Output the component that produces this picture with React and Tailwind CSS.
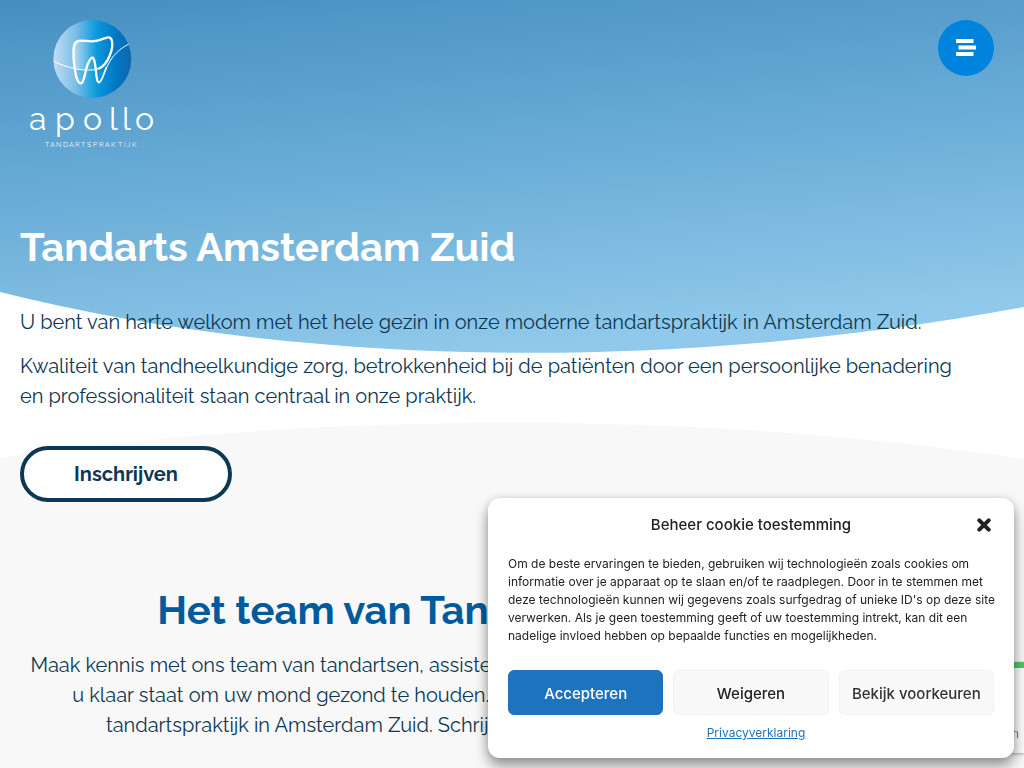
import React, { useState } from "react";

const Logo = () => (
  <svg viewBox="0 0 124 130" className="w-[124px] h-[130px]" role="img" aria-label="Apollo Tandartspraktijk">
    <defs>
      <linearGradient id="ball" x1="0" y1="0" x2="1" y2="0">
        <stop offset="0" stopColor="#c3dcf2" />
        <stop offset="0.28" stopColor="#7cbfe8" />
        <stop offset="0.55" stopColor="#0a9bdc" />
        <stop offset="0.8" stopColor="#0078c4" />
        <stop offset="1" stopColor="#1265ad" />
      </linearGradient>
      <linearGradient id="tooth" x1="0" y1="0" x2="1" y2="0">
        <stop offset="0" stopColor="#c3dcf2" />
        <stop offset="0.6" stopColor="#0a9bdc" />
        <stop offset="1" stopColor="#0078c4" />
      </linearGradient>
    </defs>
    {/* tooth mark */}
    <g transform="translate(-10 -10) scale(0.3333)" fill="none" stroke="#fff" strokeLinecap="round">
      <circle cx="217" cy="147" r="117" fill="url(#ball)" stroke="none" />
      <path
        d="M171 96C158 110 158 150 164 176C200 184 240 176 258 153C276 132 282 98 272 84C260 74 244 94 216 94C198 94 184 86 171 96Z"
        fill="url(#tooth)"
        stroke="none"
      />
      <path d="M103 155C140 173 200 189 236 176" strokeWidth="3" />
      <path
        d="M236 176C266 163 282 112 275 90C268 70 250 94 216 94C190 94 168 84 162 108C157 135 163 170 167 192C171 214 178 222 184 220C194 215 194 186 203 163C210 145 216 140 220 145C230 158 226 217 237 217"
        strokeWidth="7"
      />
      <path d="M237 217C250 214 252 178 276 144C292 124 308 111 325 103" strokeWidth="3" />
      <path d="M237 217C246 214 249 196 259 173" strokeWidth="5" />
    </g>
    <text
      x="-1 25 53 79 92 105"
      y="110"
      fill="#fff"
      fontSize="32"
      className="font-['Raleway','Lato',sans-serif] font-normal"
    >
      apollo
    </text>
    <text
      x="15 20 26 33 39 45 51 57 63 69 75 81 88 94 97 102"
      y="127"
      fill="#e3f1fa"
      fontSize="7"
      className="font-['Raleway','Lato',sans-serif] font-normal"
    >
      TANDARTSPRAKTIJK
    </text>
  </svg>
);

const HeroBackground = () => (
  <svg
    viewBox="0 0 1024 460"
    preserveAspectRatio="none"
    className="col-start-1 row-start-1 w-full h-[460px]"
    aria-hidden="true"
  >
    <defs>
      <linearGradient id="sky" gradientUnits="userSpaceOnUse" x1="493" y1="-50" x2="531" y2="350">
        <stop offset="0" stopColor="#458cc0" />
        <stop offset="0.13" stopColor="#4f97c6" />
        <stop offset="0.52" stopColor="#6aadd9" />
        <stop offset="0.62" stopColor="#73b3da" />
        <stop offset="1" stopColor="#90c9eb" />
      </linearGradient>
    </defs>
    <path d="M0 0H1024V459C700 411 324 411 0 458Z" fill="#fff" />
    <path d="M0 0H1024V307C710 366 330 375 0 292Z" fill="url(#sky)" />
  </svg>
);

const CookieDialog = ({ onClose }) => (
  <div
    role="dialog"
    aria-labelledby="cookie-title"
    className="fixed right-[10px] bottom-[10px] w-[526px] max-w-full rounded-xl bg-white px-5 pt-[17px] pb-4 text-[#222] font-['Inter',sans-serif] shadow-[0_8px_14px_rgba(0,0,0,0.4),0_0_8px_rgba(0,0,0,0.12)]"
  >
    <div className="grid grid-cols-[20px_1fr_20px] items-center mb-5">
      <h2 id="cookie-title" className="col-start-2 text-center text-[15px] leading-5 font-medium">
        Beheer cookie toestemming
      </h2>
      <button type="button" onClick={onClose} aria-label="Sluiten" className="flex h-5 items-center justify-center">
        <svg viewBox="0 0 14 14" className="w-[14px] h-[14px]" stroke="#222" strokeWidth="4" strokeLinecap="round">
          <path d="M2.3 2.3L11.7 11.7M11.7 2.3L2.3 11.7" />
        </svg>
      </button>
    </div>
    <p className="mb-[25px] text-xs leading-[18px]">
      Om de beste ervaringen te bieden, gebruiken wij technologieën zoals cookies om
      <br />
      informatie over je apparaat op te slaan en/of te raadplegen. Door in te stemmen met
      <br />
      <span className="whitespace-nowrap">
        deze technologieën kunnen wij gegevens zoals surfgedrag of unieke ID's op deze site
      </span>
      <br />
      verwerken. Als je geen toestemming geeft of uw toestemming intrekt, kan dit een
      <br />
      nadelige invloed hebben op bepaalde functies en mogelijkheden.
    </p>
    <div className="grid grid-cols-3 gap-[10px] text-[15px] font-medium">
      <button
        type="button"
        onClick={onClose}
        className="h-[45px] rounded-md border border-[#1e73be] bg-[#1e73be] pt-0.5 text-white"
      >
        Accepteren
      </button>
      <button
        type="button"
        onClick={onClose}
        className="h-[45px] rounded-md border border-[#f2f2f2] bg-[#f9f9f9] pt-0.5"
      >
        Weigeren
      </button>
      <button
        type="button"
        className="h-[45px] rounded-md border border-[#f2f2f2] bg-[#f9f9f9] pt-0.5 text-[#333] whitespace-nowrap"
      >
        Bekijk voorkeuren
      </button>
    </div>
    <div className="mt-[9px] pl-[10px] text-center text-xs leading-[18px]">
      <a href="#privacy" className="text-[#1e73be] underline">
        Privacyverklaring
      </a>
    </div>
  </div>
);

const ReviewCard = () => (
  <aside className="fixed right-0 bottom-[15px] w-48 h-[91px] border-t-[6px] border-[#4cc766] bg-[#fcfcfc] pt-[58px] pr-[5px] text-right text-xs leading-4 text-[#777] font-['Roboto',sans-serif] shadow-[0_1px_3px_rgba(0,0,0,0.35)]">
    beoordelingen
  </aside>
);

const App = () => {
  const [cookiesOpen, setCookiesOpen] = useState(true);

  return (
    <div className="h-screen overflow-hidden bg-[#f8f8f8] font-['Raleway','Lato',sans-serif] text-xl leading-[30px] text-[#0d3853]">
      <div className="grid">
        <HeroBackground />
        <div className="col-start-1 row-start-1">
          <header className="flex items-start justify-between pt-5 px-[30px]">
            <a href="#home">
              <Logo />
            </a>
            <button
              type="button"
              aria-label="Menu"
              className="flex w-14 h-14 items-center justify-center rounded-full bg-[#0083dc]"
            >
              <svg viewBox="0 0 20 18" className="w-5 h-[18px]" fill="#fff">
                <rect x="0" y="0" width="17.5" height="4" />
                <rect x="2.5" y="6.5" width="17.5" height="4" />
                <rect x="0" y="13" width="17.5" height="4" />
              </svg>
            </button>
          </header>
          <section className="px-5 pt-[69px]">
            <h1 className="text-[40px] leading-[56px] font-bold text-white">Tandarts Amsterdam Zuid</h1>
            <p className="mt-8">
              U bent van harte welkom met het hele gezin in onze moderne tandartspraktijk in Amsterdam Zuid.
            </p>
            <p className="mt-[14px]">
              Kwaliteit van tandheelkundige zorg, betrokkenheid bij de patiënten door een persoonlijke benadering
              <br />
              en professionaliteit staan centraal in onze praktijk.
            </p>
            <a
              href="#inschrijven"
              className="mt-[35px] flex w-[212px] h-14 items-center justify-center rounded-full border-4 border-[#0d3853] bg-white font-bold"
            >
              Inschrijven
            </a>
          </section>
          <section className="px-5 pt-20 text-center">
            <h2 className="text-[40px] leading-[56px] font-bold text-[#005b9c]">
              Het team van Tandartspraktijk Apollo
            </h2>
            <p className="mt-3">
              Maak kennis met ons team van tandartsen, assistentes en mondhygiënistes, dat iedere dag speciaal voor
              <br />
              u klaar staat om uw mond gezond te houden. Wij heten u van harte welkom in onze vernieuwde
              <br />
              tandartspraktijk in Amsterdam Zuid. Schrijf u vandaag nog online in als nieuwe patiënt(e).
            </p>
          </section>
        </div>
      </div>
      <ReviewCard />
      {cookiesOpen && <CookieDialog onClose={() => setCookiesOpen(false)} />}
    </div>
  );
};

export default App;
